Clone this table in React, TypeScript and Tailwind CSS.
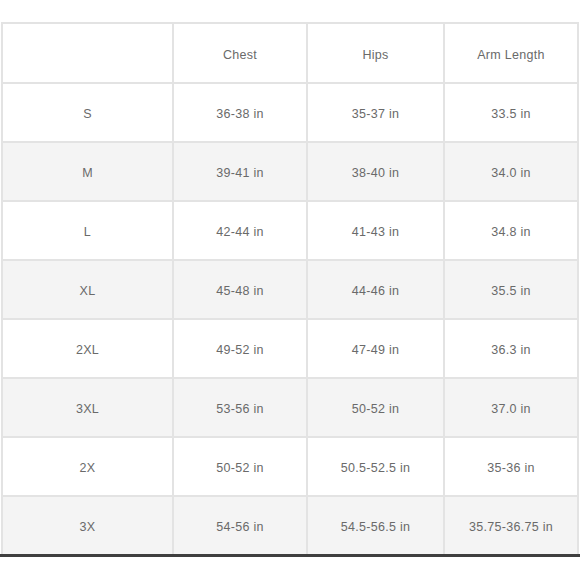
import React from "react";

const rows = [
  ["S", "36-38 in", "35-37 in", "33.5 in"],
  ["M", "39-41 in", "38-40 in", "34.0 in"],
  ["L", "42-44 in", "41-43 in", "34.8 in"],
  ["XL", "45-48 in", "44-46 in", "35.5 in"],
  ["2XL", "49-52 in", "47-49 in", "36.3 in"],
  ["3XL", "53-56 in", "50-52 in", "37.0 in"],
  ["2X", "50-52 in", "50.5-52.5 in", "35-36 in"],
  ["3X", "54-56 in", "54.5-56.5 in", "35.75-36.75 in"],
];

export default function App() {
  return (
    <div className="w-[580px] h-[580px] bg-white pt-[22px] overflow-hidden font-['Liberation_Sans',Arial,sans-serif] text-[12.5px] tracking-[0.3px] text-[#6a6a6a]">
      <table className="ml-[1px] w-[576px] table-fixed border-collapse">
        <colgroup>
          <col className="w-[171px]" />
          <col className="w-[134px]" />
          <col className="w-[137px]" />
          <col className="w-[134px]" />
        </colgroup>
        <thead>
          <tr className="h-[60px] bg-white">
            <th className="border-2 border-[#e3e3e3] font-normal"></th>
            <th className="border-2 border-[#e3e3e3] font-normal pt-[4px]">Chest</th>
            <th className="border-2 border-[#e3e3e3] font-normal pt-[4px]">Hips</th>
            <th className="border-2 border-[#e3e3e3] font-normal pt-[4px]">Arm Length</th>
          </tr>
        </thead>
        <tbody>
          {rows.map((r, i) => (
            <tr key={r[0]} className={`h-[59px] ${i % 2 === 1 ? "bg-[#f4f4f4]" : "bg-white"}`}>
              {r.map((c, j) => (
                <td key={j} className="border-2 border-[#e3e3e3] text-center pt-[4px]">
                  {c}
                </td>
              ))}
            </tr>
          ))}
        </tbody>
      </table>
      <div className="-mt-[2px] h-[3px] bg-[#3f3f3f]" />
    </div>
  );
}
